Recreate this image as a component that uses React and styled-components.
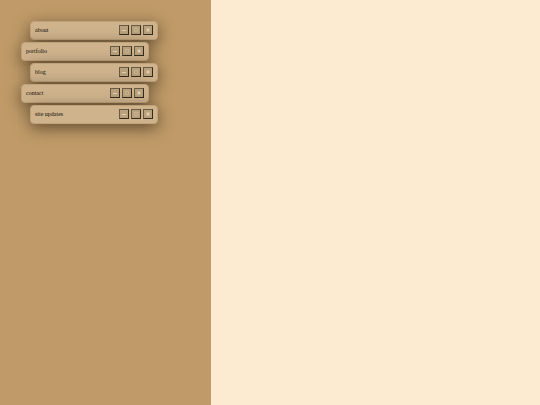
import React from "react";
import styled, { createGlobalStyle } from "styled-components";

const GlobalStyle = createGlobalStyle`
  *, *::before, *::after { box-sizing: border-box; }
  body {
    margin: 0;
    background: #fcebd0;
    color: #100a03;
    font: 6px/10px "Liberation Serif", "Times New Roman", serif;
  }
`;

const Page = styled.div`
  display: grid;
  grid-template-columns: 39fr 61fr;
  min-height: 100vh;
`;

const Sidebar = styled.nav`
  background: #c09b69;
  padding: 21px;
`;

const Content = styled.main`
  background: #fcebd0;
`;

const WindowList = styled.ul`
  display: flex;
  flex-direction: column;
  gap: 2px;
  margin: 0;
  padding: 0;
  list-style: none;
`;

const WindowBar = styled.li`
  display: flex;
  align-items: flex-start;
  justify-content: space-between;
  width: 76%;
  height: 19px;
  margin-left: ${({ $indented }) => ($indented ? "9px" : "0")};
  padding: 3px 4px;
  border: 1px solid #c0a27a;
  border-radius: 4px;
  background: #cfb38d;
  box-shadow: 0 4px 16px rgba(20, 12, 4, 0.55);
`;

const WindowLink = styled.a`
  color: inherit;
  text-decoration: none;
`;

const Controls = styled.div`
  display: flex;
  gap: 2px;
`;

const ControlButton = styled.button`
  display: grid;
  place-items: center;
  width: 10px;
  height: 10px;
  padding: 0;
  border: 1px solid;
  border-color: #695a43 #352b1c #352b1c #695a43;
  background: #b8a17c;
  color: #e2d0b0;
`;

const Glyph = styled.svg`
  display: block;
  width: 8px;
  height: 8px;
`;

const icons = {
  minimize: <path d="M2 4h4v1H2z" fill="currentColor" />,
  maximize: <path d="M2.5 5.5v-3h3v3z" fill="none" stroke="currentColor" opacity="0.4" />,
  close: (
    <>
      <path d="M2 2h4v4H2z" fill="currentColor" opacity="0.35" />
      <path d="M3 3h2v2H3z" fill="currentColor" />
    </>
  ),
};

const windows = ["about", "portfolio", "blog", "contact", "site updates"];

export default function App() {
  return (
    <>
      <GlobalStyle />
      <Page>
        <Sidebar>
          <WindowList>
            {windows.map((name, index) => (
              <WindowBar key={name} $indented={index % 2 === 0}>
                <WindowLink href="#">{name}</WindowLink>
                <Controls>
                  {Object.entries(icons).map(([action, icon]) => (
                    <ControlButton key={action} type="button" aria-label={`${action} ${name}`}>
                      <Glyph viewBox="0 0 8 8" aria-hidden="true">{icon}</Glyph>
                    </ControlButton>
                  ))}
                </Controls>
              </WindowBar>
            ))}
          </WindowList>
        </Sidebar>
        <Content />
      </Page>
    </>
  );
}
